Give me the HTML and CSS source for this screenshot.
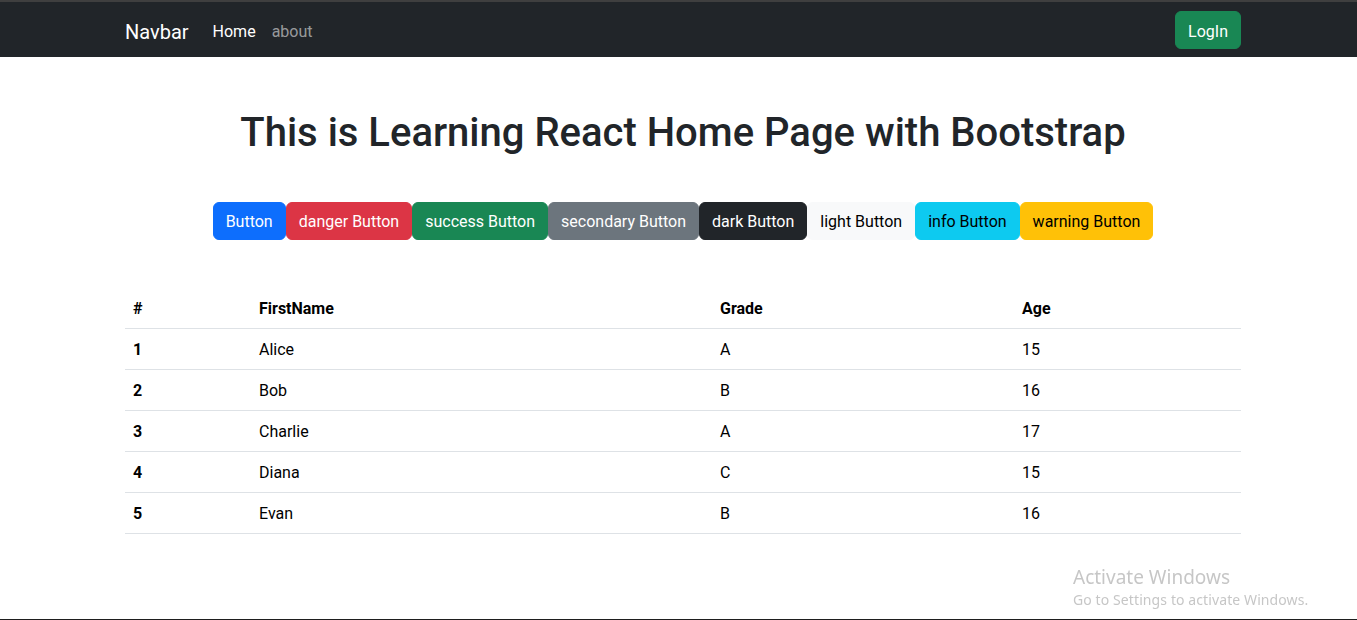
FILE: index.html
```html
<!DOCTYPE html>
<html lang="en">
<head>
<meta charset="utf-8">
<title>Learning React</title>
<link rel="stylesheet" href="styles.css">
</head>
<body>
<div class="page">
  <nav class="navbar">
    <div class="container nav-inner">
      <div class="nav-left">
        <a class="brand" href="#">Navbar</a>
        <ul class="nav-links">
          <li><a class="nav-link active" href="#">Home</a></li>
          <li><a class="nav-link" href="#">about</a></li>
        </ul>
      </div>
      <button class="btn btn-success btn-login">LogIn</button>
    </div>
  </nav>

  <main class="container">
    <h1 class="title">This is Learning React Home Page with Bootstrap</h1>

    <div class="btn-row">
      <button class="btn btn-primary">Button</button>
      <button class="btn btn-danger">danger Button</button>
      <button class="btn btn-success">success Button</button>
      <button class="btn btn-secondary">secondary Button</button>
      <button class="btn btn-dark">dark Button</button>
      <button class="btn btn-light">light Button</button>
      <button class="btn btn-info">info Button</button>
      <button class="btn btn-warning">warning Button</button>
    </div>

    <table class="table">
      <colgroup>
        <col class="col-num">
        <col class="col-name">
        <col class="col-grade">
        <col class="col-age">
      </colgroup>
      <thead>
        <tr><th>#</th><th>FirstName</th><th>Grade</th><th>Age</th></tr>
      </thead>
      <tbody>
        <tr><th>1</th><td>Alice</td><td>A</td><td>15</td></tr>
        <tr><th>2</th><td>Bob</td><td>B</td><td>16</td></tr>
        <tr><th>3</th><td>Charlie</td><td>A</td><td>17</td></tr>
        <tr><th>4</th><td>Diana</td><td>C</td><td>15</td></tr>
        <tr><th>5</th><td>Evan</td><td>B</td><td>16</td></tr>
      </tbody>
    </table>
  </main>
</div>

<div class="watermark">
  <div class="wm-title">Activate Windows</div>
  <div class="wm-sub">Go to Settings to activate Windows.</div>
</div>
<div class="bottom-edge"></div>
</body>
</html>
```

FILE: styles.css
```css
html, body {
  margin: 0;
  padding: 0;
  overflow: hidden;
}

body {
  font-family: Roboto, "Noto Sans", sans-serif;
  font-size: 16px;
  line-height: 1.5;
  color: #212529;
  background: #fff;
  border-top: 2px solid #3f3f3f;
}

.page {
  width: 1366px;
}

.container {
  width: 1140px;
  margin: 0 auto;
  padding: 0 12px;
  box-sizing: border-box;
}

/* Navbar */
.navbar {
  background: #212529;
  height: 55px;
  display: flex;
  align-items: center;
}

.nav-inner {
  display: flex;
  align-items: center;
  justify-content: space-between;
}

.nav-left {
  display: flex;
  align-items: center;
}

.brand {
  color: #fff;
  font-size: 20px;
  text-decoration: none;
  margin-right: 16px;
  padding: 7px 0 3px;
}

.nav-links {
  list-style: none;
  margin: 0;
  padding: 0;
  display: flex;
}

.nav-link {
  display: block;
  padding: 10px 8px 6px;
  color: rgba(255, 255, 255, 0.55);
  text-decoration: none;
}

.nav-link.active {
  color: #fff;
}

/* Buttons */
.btn {
  font-family: inherit;
  font-size: 16px;
  line-height: 1.5;
  padding: 7px 12px 5px;
  border: 1px solid transparent;
  border-radius: 6px;
  cursor: pointer;
}

.btn-login {
  padding: 8px 12px 4px;
}

.btn-primary { background: #0d6efd; border-color: #0d6efd; color: #fff; }
.btn-danger { background: #dc3545; border-color: #dc3545; color: #fff; }
.btn-success { background: #198754; border-color: #198754; color: #fff; }
.btn-secondary { background: #6c757d; border-color: #6c757d; color: #fff; }
.btn-dark { background: #212529; border-color: #212529; color: #fff; }
.btn-light { background: #f8f9fa; border-color: #f8f9fa; color: #000; }
.btn-info { background: #0dcaf0; border-color: #0dcaf0; color: #000; }
.btn-warning { background: #ffc107; border-color: #ffc107; color: #000; }

/* Main */
.title {
  margin: 52px 0 0;
  font-size: 40px;
  font-weight: 500;
  line-height: 1.2;
  text-align: center;
  color: #212529;
}

.btn-row {
  display: flex;
  justify-content: center;
  margin-top: 45px;
}

.table {
  width: 100%;
  margin-top: 48px;
  border-collapse: collapse;
  table-layout: fixed;
  color: #000;
}

.col-num { width: 126px; }
.col-name { width: 461px; }
.col-grade { width: 302px; }
.col-age { width: auto; }

.table th,
.table td {
  padding: 9px 8px 7px;
  text-align: left;
  border-bottom: 1px solid #dee2e6;
}

.table th {
  font-weight: 700;
}

.table td {
  font-weight: 400;
}

/* Overlays */
.watermark {
  position: fixed;
  left: 1073px;
  top: 564px;
  color: rgba(160, 160, 160, 0.6);
  font-family: "Noto Sans", "Open Sans", sans-serif;
}

.wm-title {
  font-size: 19px;
  line-height: 26px;
}

.wm-sub {
  font-size: 14px;
  line-height: 20px;
  letter-spacing: 0.1px;
}

.bottom-edge {
  position: fixed;
  left: 0;
  right: 0;
  bottom: 0;
  height: 1px;
  background: #1e1e1e;
}
```
